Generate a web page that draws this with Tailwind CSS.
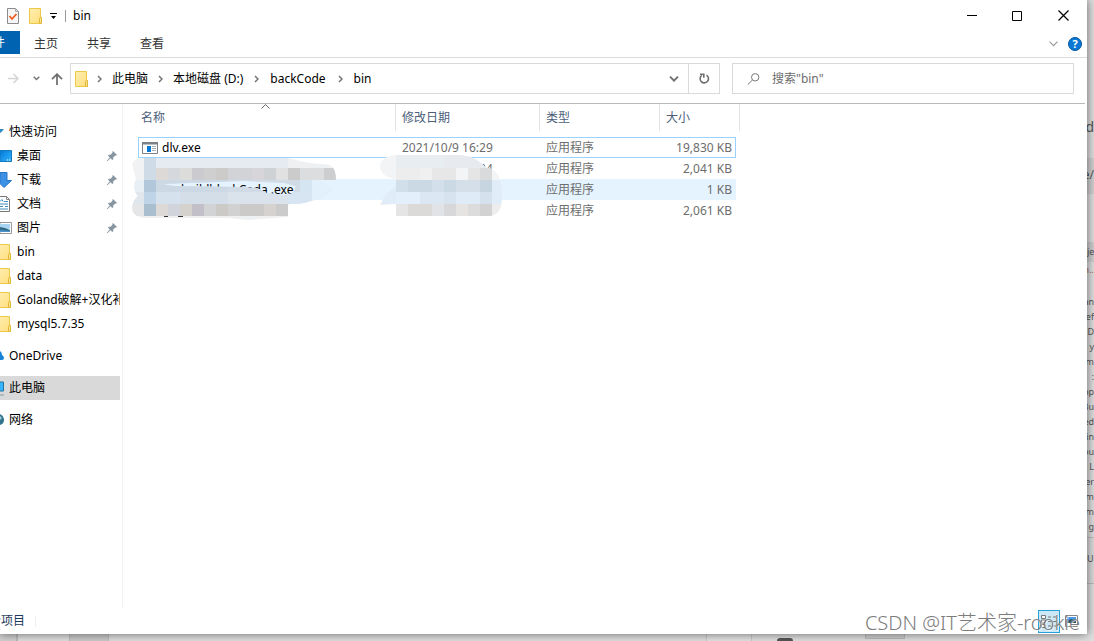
<!DOCTYPE html>
<html lang="zh-CN">
<head>
<meta charset="utf-8">
<title>bin</title>
<script src="https://cdn.jsdelivr.net/npm/@tailwindcss/browser@4"></script>
</head>
<body class="relative grid h-screen grid-cols-[1fr_7px] grid-rows-[1fr_7px] overflow-hidden bg-[#dedede] font-['Noto_Sans','Noto_Sans_CJK_SC',sans-serif] text-xs text-black">

<svg width="0" height="0" class="absolute">
  <defs>
    <linearGradient id="fg" x1="0" y1="0" x2="1" y2="1"><stop offset="0" stop-color="#ffeeb0"/><stop offset="1" stop-color="#ffdf7d"/></linearGradient>
    <linearGradient id="bl" x1="0" y1="0" x2="1" y2="1"><stop offset="0" stop-color="#0078d7"/><stop offset="1" stop-color="#35b5ff"/></linearGradient>
    <symbol id="folder" viewBox="0 0 13 16"><path d="M.5.5h11v9h1v6H.5z" fill="url(#fg)" stroke="#ecc94b"/><path d="M10.500 15V10.500q0-1 1-1h1v6z" fill="#ffe48f" stroke="#deb73b"/></symbol>
    <symbol id="pin" viewBox="0 0 10 10"><path d="M6 0l4 4-1 .7-.8-.2-2 2 .1 1.700-1 .8L3.500 7.200.6 10H0v-.6l2.800-2.900L1 4.700l.8-1 1.700.1 2-2L5.300 1z" fill="#8795a1"/></symbol>
    <symbol id="next" viewBox="0 0 5 8"><path d="M1 1l3 3-3 3" fill="none" stroke="#757575" stroke-width="1.500"/></symbol>
  </defs>
</svg>

<main class="relative z-10 flex min-h-0 min-w-0 flex-col overflow-hidden bg-white shadow-[0_0_9px_rgba(0,0,0,0.55)]">
  <header class="flex h-[31px] shrink-0 items-center">
    <button aria-label="属性" class="ml-[7px]"><svg width="12" height="16" viewBox="0 0 12 16"><path d="M.5.5h8l3 3v12H.5z" fill="#f5f5f5" stroke="#8b8b8b"/><path d="M8.500.5v3h3" fill="none" stroke="#aaa"/><path d="M2.500 8l2.500 3 4.500-5" fill="none" stroke="#f05a1c" stroke-width="1.800"/></svg></button>
    <button aria-label="新建文件夹" class="ml-[10px]"><svg width="13" height="16"><use href="#folder"/></svg></button>
    <button aria-label="自定义快速访问工具栏" class="ml-2"><svg width="7" height="6" viewBox="0 0 7 6"><path d="M0 0h7v1H0zM1 3h5L3.500 6z"/></svg></button>
    <span class="ml-2 h-3 w-px bg-[#9a9a9a]"></span>
    <h1 class="ml-[7px] flex-1">bin</h1>
    <button aria-label="最小化" class="flex h-full w-[45px] items-center justify-center"><svg width="10" height="1"><path d="M0 0h10v1H0z"/></svg></button>
    <button aria-label="最大化" class="flex h-full w-[45px] items-center justify-center"><svg width="10" height="10"><path d="M.5.5h9v9h-9z" fill="none" stroke="#000"/></svg></button>
    <button aria-label="关闭" class="flex h-full w-[48px] items-center justify-center"><svg width="11" height="11"><path d="M.5.5l10 10M10.500.5l-10 10" stroke="#000" stroke-width="1.200"/></svg></button>
  </header>

  <nav aria-label="功能区" class="flex h-[27px] shrink-0 items-start border-b border-[#dadbdc] text-[#333]">
    <button class="flex h-[23px] w-5 justify-end overflow-hidden bg-[#0063b1] pr-[15px] leading-6 whitespace-nowrap text-white">文件</button>
    <button class="ml-[14px] leading-[26px]">主页</button>
    <button class="ml-[29px] leading-[26px]">共享</button>
    <button class="ml-[29px] leading-[26px]">查看</button>
    <span class="flex-1"></span>
    <button aria-label="展开功能区" class="mr-[10px] flex h-[26px] items-center"><svg width="9" height="6" viewBox="0 0 9 6"><path d="M.5.7l4 4 4-4" fill="none" stroke="#999" stroke-width="1.200"/></svg></button>
    <button aria-label="帮助" class="mt-[6px] mr-[5px] h-[14px] w-[14px] rounded-full border border-[#00579d] bg-[#0a78d4] text-[11px] leading-[12px] font-bold text-white">?</button>
  </nav>

  <div class="flex h-[45px] shrink-0 items-center pb-[4px]">
    <button aria-label="前进" class="ml-2"><svg width="11" height="11" viewBox="0 0 11 11"><path d="M0 5.500h10M5.500 1l4.500 4.500L5.500 10" fill="none" stroke="#d4d4d4" stroke-width="1.500"/></svg></button>
    <button aria-label="最近浏览的位置" class="ml-[14px]"><svg width="7" height="5" viewBox="0 0 7 5"><path d="M.7.700l2.800 2.800L6.300.7" fill="none" stroke="#757575" stroke-width="1.500"/></svg></button>
    <button aria-label="上移" class="ml-[11px]"><svg width="12" height="12" viewBox="0 0 12 12"><path d="M6 12V1.500M1 6.200l5-5 5 5" fill="none" stroke="#6c6c6c" stroke-width="1.700"/></svg></button>
    <div class="ml-[7px] flex h-[31px] min-w-0 flex-1 items-center border border-[#d9d9d9] pl-1">
      <svg width="13" height="16" class="shrink-0"><use href="#folder"/></svg>
      <svg width="5" height="8" class="ml-[9px]"><use href="#next"/></svg>
      <a href="#" class="ml-[10px]">此电脑</a>
      <svg width="5" height="8" class="ml-[10px]"><use href="#next"/></svg>
      <a href="#" class="ml-[10px]">本地磁盘 (D:)</a>
      <svg width="5" height="8" class="ml-[11px]"><use href="#next"/></svg>
      <a href="#" class="ml-[11px]">backCode</a>
      <svg width="5" height="8" class="ml-[12px]"><use href="#next"/></svg>
      <a href="#" class="ml-[11px]">bin</a>
      <span class="flex-1"></span>
      <button aria-label="以前的位置" class="mr-[9px]"><svg width="10" height="6" viewBox="0 0 10 6"><path d="M1 .7l4 4 4-4" fill="none" stroke="#707070" stroke-width="1.900"/></svg></button>
      <button aria-label="刷新" class="flex h-full w-[31px] items-center justify-center border-l border-[#d9d9d9]"><svg width="11" height="11" viewBox="0 0 11 11"><path d="M7.500 2.100A4.200 4.200 0 1 1 2.800 2.300M1 1.200h3.800v3.600" fill="none" stroke="#707070" stroke-width="1.600"/></svg></button>
    </div>
    <label class="mr-[13px] ml-3 flex h-[31px] w-[342px] items-center border border-[#d9d9d9] pl-[14px]">
      <svg width="13" height="12" viewBox="0 0 13 12"><circle cx="8.200" cy="4.300" r="3.700" fill="none" stroke="#777"/><path d="M5.500 7L.8 11.500" stroke="#777"/></svg>
      <input aria-label="搜索" placeholder="搜索&quot;bin&quot;" class="ml-3 min-w-0 flex-1 outline-none placeholder:text-[#6d6d6d]">
    </label>
  </div>

  <div class="mr-[2px] h-px shrink-0 bg-[#b9b9b9]"></div>
  <div class="flex min-h-0 flex-1">
    <aside class="w-[123px] shrink-0 overflow-hidden border-r border-[#f3f3f3] pt-4 leading-6 whitespace-nowrap">
      <a href="#" class="flex h-6 items-center"><svg width="4" height="9"><path d="M0 1h4L1.500 4 0 5z" fill="#2d8ac7"/></svg><span class="ml-[5px]">快速访问</span></a>
      <a href="#" class="flex h-6 items-center"><svg width="12" height="12"><path d="M0 .5h11.500v11H0z" fill="url(#bl)" stroke="#1679bd"/><path d="M7 10h1m1 0h1" stroke="#fff"/></svg><span class="ml-[5px] flex-1">桌面</span><svg width="10" height="10" class="mr-[5px]"><use href="#pin"/></svg></a>
      <a href="#" class="flex h-6 items-center"><svg width="12" height="16"><path d="M1 .5h6v8h4.500L4 15.500l-4-4V.5z" fill="#3c91e5" stroke="#2776c8"/></svg><span class="ml-[5px] flex-1">下载</span><svg width="10" height="10" class="mr-[5px]"><use href="#pin"/></svg></a>
      <a href="#" class="flex h-6 items-center"><svg width="12" height="16"><path d="M0 .5h6.500l3 3v12H0" fill="#fff" stroke="#777"/><path d="M6.500.5v3h3" fill="none" stroke="#888"/><path d="M0 5.500l2-2 1 2M4 5.500h4M0 8h8M0 10.500h3m2 0h3M0 13h8" stroke="#3d8dbd" fill="none"/></svg><span class="ml-[5px] flex-1">文档</span><svg width="10" height="10" class="mr-[5px]"><use href="#pin"/></svg></a>
      <a href="#" class="flex h-6 items-center"><svg width="12" height="12"><path d="M0 .5h11.500v11H0z" fill="#fff" stroke="#999"/><path d="M0 2h10v5H0z" fill="#a9d5f5"/><path d="M0 5l5 1 5 2v2H0z" fill="#326b83"/><path d="M0 8l10 1v1H0z" fill="#4b92d0"/></svg><span class="ml-[5px] flex-1">图片</span><svg width="10" height="10" class="mr-[5px]"><use href="#pin"/></svg></a>
      <a href="#" class="flex h-6 items-center"><svg width="11" height="16" viewBox="2 0 11 16"><use href="#folder" width="13" height="16"/></svg><span class="ml-[6px]">bin</span></a>
      <a href="#" class="flex h-6 items-center"><svg width="11" height="16" viewBox="2 0 11 16"><use href="#folder" width="13" height="16"/></svg><span class="ml-[6px]">data</span></a>
      <a href="#" class="mr-[2px] flex h-6 items-center overflow-hidden"><svg width="11" height="16" viewBox="2 0 11 16" class="shrink-0"><use href="#folder" width="13" height="16"/></svg><span class="ml-[6px]">Goland破解+汉化补丁</span></a>
      <a href="#" class="flex h-6 items-center"><svg width="11" height="16" viewBox="2 0 11 16"><use href="#folder" width="13" height="16"/></svg><span class="ml-[6px]">mysql5.7.35</span></a>
      <a href="#" class="mt-2 flex h-6 items-center"><svg width="4" height="10"><path d="M0 0q2 1 2 4 2 1 2 3t-2 2H0z" fill="#1683d8"/></svg><span class="ml-[5px]">OneDrive</span></a>
      <a href="#" class="mt-2 mr-[2px] flex h-6 items-center bg-[#d9d9d9]"><svg width="4" height="15"><path d="M0 1h3.500v9H0" fill="#35b5ff" stroke="#25749f"/><path d="M0 14h4" stroke="#8499a8"/></svg><span class="ml-[5px]">此电脑</span></a>
      <a href="#" class="mt-2 flex h-6 items-center"><svg width="4" height="13"><path d="M0 0q4 2 4 6t-4 5z" fill="#32748e"/><path d="M0 2l2 2-2 2" fill="#9bcbd9"/></svg><span class="ml-[5px]">网络</span></a>
    </aside>

    <section class="relative min-w-0 flex-1 pl-[15px]">
      <table class="w-[598px] table-fixed border-separate border-spacing-0 text-[#6d6d6d]">
        <colgroup><col class="w-[258px]"><col class="w-[144px]"><col class="w-[120px]"><col class="w-[76px]"></colgroup>
        <thead class="text-left text-[#4c607a]">
          <tr class="h-[33px] align-top leading-[27px]">
            <th class="relative p-0 font-normal"><div class="h-[27px] border-r border-[#e5e5e5] pl-[3px]">名称</div><svg width="9" height="5" class="absolute top-0 left-[123px]"><path d="M.5 4.500l4-4 4 4" fill="none" stroke="#666"/></svg></th>
            <th class="p-0 font-normal"><div class="h-[27px] border-r border-[#e5e5e5] pl-[6px]">修改日期</div></th>
            <th class="p-0 font-normal"><div class="h-[27px] border-r border-[#e5e5e5] pl-[6px]">类型</div></th>
            <th class="p-0 font-normal"><div class="-mr-1 h-[27px] border-r border-[#e5e5e5] pl-[6px]">大小</div></th>
          </tr>
        </thead>
        <tbody class="leading-[19px] whitespace-nowrap">
          <tr class="h-[21px] outline-1 -outline-offset-1 outline-[#99d1ff]">
            <td class="p-0 pl-1 text-black"><div class="flex items-center gap-1"><svg width="16" height="12"><path d="M.5.5h15v11H.5z" fill="#fff" stroke="#7b8186"/><path d="M0 0h16v2.500H0z" fill="#7b8186"/><path d="M5 4h4v6H5z" fill="#0078d7"/><path d="M10 4.500h4m-4 2h4m-4 2h4" stroke="#a2b0ba"/></svg>dlv.exe</div></td>
            <td class="p-0 pl-[6px]">2021/10/9 16:29</td><td class="p-0 pl-[6px]">应用程序</td><td class="p-0 pr-1 text-right">19,830 KB</td>
          </tr>
          <tr class="h-[21px]">
            <td class="p-0"></td>
            <td class="p-0 pl-[6px]">2021/10/9 16:24</td><td class="p-0 pl-[6px]">应用程序</td><td class="p-0 pr-1 text-right">2,041 KB</td>
          </tr>
          <tr class="h-[21px] bg-[#e5f3ff]">
            <td class="p-0 pl-[43px] text-black">buildblackCoda .exe</td>
            <td class="p-0"></td><td class="p-0 pl-[6px]">应用程序</td><td class="p-0 pr-1 text-right">1 KB</td>
          </tr>
          <tr class="h-[21px]">
            <td class="p-0"></td>
            <td class="p-0"></td><td class="p-0 pl-[6px]">应用程序</td><td class="p-0 pr-1 text-right">2,061 KB</td>
          </tr>
        </tbody>
      </table>

      <!-- pixelated smears over the private file names and dates; units are pixels from the section's corner -->
      <svg class="pointer-events-none absolute top-0 left-0" width="400" height="125" viewBox="123 104 400 125">
        <defs>
          <clipPath id="c1"><path clip-rule="evenodd" d="M132 164q2-6 12-6H288l20 5 22 2q6 3 6 15H318l14 10-10 8-18 5-16 2v12l-40 3-20-2H144q-12-2-12-10 1-8 6-12-6-7-2-17zM162 184l12 2 65 1 18 1 10 5 18 2 8-2 3-7-12-3-40-2z"/></clipPath>
          <clipPath id="c2"><path d="M380 165q2-9 16-10h65q16 2 24 12 8 1 13 8 6 12 3 32-4 9-12 9H396v-12l-16 1 5-10 11-10V179q-16-2-16-14z"/></clipPath>
        </defs>
        <g clip-path="url(#c1)">
          <path d="M130 155h210v25H130z" fill="#f1f2f3"/><path d="M130 180h210v24H130z" fill="#d7e4f0"/><path d="M130 204h160v16H130z" fill="#eff0f1"/>
          <path d="M144 158h144v10H144z" fill="#e5ebf0"/><path d="M288 158h40v10h-40z" fill="#eef0f2"/>
          <path d="M156 168h12v12h-12z" fill="#ddd9d6"/><path d="M168 168h12v12h-12z" fill="#d5d8dd"/><path d="M180 168h12v12h-12z" fill="#dcdcda"/><path d="M192 168h12v12h-12z" fill="#cbcbcf"/><path d="M204 168h12v12h-12z" fill="#d0cfcf"/><path d="M216 168h12v12h-12z" fill="#cdcbc9"/><path d="M228 168h24v12h-24z" fill="#d1d3d6"/><path d="M252 168h12v12h-12z" fill="#d7d5da"/><path d="M264 168h12v12h-12z" fill="#cfd2d4"/><path d="M276 168h12v12h-12z" fill="#e1e1e1"/><path d="M288 168h12v12h-12z" fill="#cbcbcb"/><path d="M300 168h24v12h-24z" fill="#dcdddf"/><path d="M324 168h12v12h-12z" fill="#cdced0"/>
          <path d="M156 180h72v12h-72z" fill="#ccd9e4"/><path d="M228 180h72v12h-72z" fill="#d0dbe5"/><path d="M300 180h12v12h-12z" fill="#d6e5f2"/><path d="M312 180h24v24h-24z" fill="#e2f0fc"/>
          <path d="M156 192h24v12h-24z" fill="#d5e1ed"/><path d="M180 192h48v12h-48z" fill="#d3dee9"/><path d="M228 192h60v12h-60z" fill="#dae3ec"/><path d="M288 192h24v12h-24z" fill="#d7e5f2"/>
          <path d="M156 204h12v12h-12z" fill="#ddd9d6"/><path d="M168 204h12v12h-12z" fill="#d1d4da"/><path d="M180 204h12v12h-12z" fill="#d5d2ce"/><path d="M192 204h12v12h-12z" fill="#c3bfc9"/><path d="M204 204h12v12h-12z" fill="#d2d3d5"/><path d="M216 204h12v12h-12z" fill="#cbcac7"/><path d="M228 204h12v12h-12z" fill="#d1d1d1"/><path d="M240 204h24v12h-24z" fill="#cccac8"/><path d="M264 204h12v12h-12z" fill="#d6d2cf"/><path d="M276 204h12v12h-12z" fill="#cbcbcc"/>
          <path d="M144 158h12v22h-12z" fill="#cfdce7"/><path d="M144 180h12v12h-12z" fill="#b2c7d9"/><path d="M144 192h12v12h-12z" fill="#bfd4e6"/><path d="M144 204h12v12h-12z" fill="#a9bfd0"/>
          <path d="M132 180h12v12h-12z" fill="#e8eff5"/><path d="M132 192h12v12h-12z" fill="#dfe7ed"/><path d="M132 204h12v12h-12z" fill="#e5e6e7"/>
        </g>
        <path d="M164 216.500h4m10 0h5" stroke="#333"/>
        <g clip-path="url(#c2)">
          <path d="M378 154h130v26H378z" fill="#f2f4f6"/><path d="M378 180h130v24H378z" fill="#e0edf8"/><path d="M378 204h130v14H378z" fill="#ededee"/>
          <path d="M396 155h48v13h-48z" fill="#e8edf1"/><path d="M444 155h48v13h-48z" fill="#e7eaee"/>
          <path d="M396 168h24v12h-24z" fill="#ededee"/><path d="M420 168h12v12h-12z" fill="#f0f0f1"/><path d="M432 168h24v12h-24z" fill="#e8e7e7"/><path d="M468 168h12v12h-12z" fill="#e5e5e5"/><path d="M480 168h12v12h-12z" fill="#d9dadb"/>
          <path d="M396 180h12v12h-12z" fill="#d1dfeb"/><path d="M408 180h24v12h-24z" fill="#cbd9e4"/><path d="M432 180h12v12h-12z" fill="#d3dfea"/><path d="M444 180h12v12h-12z" fill="#cbd9e4"/><path d="M456 180h24v12h-24z" fill="#d4dfe9"/><path d="M480 180h12v12h-12z" fill="#c7d5e1"/>
          <path d="M396 192h24v12h-24z" fill="#e3f0fc"/><path d="M420 192h24v12h-24z" fill="#dbe8f4"/><path d="M444 192h12v12h-12z" fill="#d7e4f0"/><path d="M456 192h24v12h-24z" fill="#dfebf6"/><path d="M480 192h12v12h-12z" fill="#d5e2ed"/>
          <path d="M396 204h12v12h-12z" fill="#e5e5e6"/><path d="M408 204h24v12h-24z" fill="#dbdad9"/><path d="M432 204h12v12h-12z" fill="#e1e3e6"/><path d="M444 204h12v12h-12z" fill="#d8d8da"/><path d="M456 204h12v12h-12z" fill="#e6e4e3"/><path d="M468 204h12v12h-12z" fill="#dcdcdc"/><path d="M480 204h12v12h-12z" fill="#d2d2d3"/>
        </g>
      </svg>
    </section>
  </div>

  <footer class="flex h-[26px] shrink-0 items-center text-[#1e395b]">
    <span class="flex w-[25px] justify-end overflow-hidden whitespace-nowrap">4 个项目</span>
    <span class="ml-[10px] h-[11px] w-px bg-[#eee]"></span>
    <span class="flex-1"></span>
    <button aria-label="详细信息" class="flex h-[23px] w-[22px] items-center justify-center border border-[#26a0da] bg-[#cce8f6]"><svg width="16" height="13"><path d="M.5.5h4v3h-4zM.5 5h4v3h-4zM.5 9.500h4v3h-4z" fill="#fff" stroke="#777"/><path d="M7 2h3m2 0h3M7 6.500h3m2 0h3M7 11h3m2 0h3" stroke="#777"/></svg></button>
    <button aria-label="大图标" class="mr-[9px] ml-[5px]"><svg width="13" height="12"><path d="M.5.5h12v11H.5z" fill="#fff" stroke="#888"/><path d="M2 2h9v4H2z" fill="#4b9bea"/><path d="M2 6l4-2 5 2v2H2z" fill="#285465"/></svg></button>
  </footer>
</main>

<!-- sliver of the window behind, right side -->
<div class="relative overflow-hidden bg-[#dcdcdc] text-[9px] text-[#555]">
  <div class="absolute top-[158px] h-9 w-full bg-[#cecece]"></div>
  <div class="absolute top-[242px] h-5 w-full bg-[#ccc]"></div>
  <div class="absolute top-[537px] h-[47px] w-full border-y border-[#bbb] bg-[#d8d8d8]"></div>
  <span class="absolute top-[117px] right-0 text-sm">d</span>
  <span class="absolute top-[167px] right-0 text-xs">e/</span>
  <span class="absolute top-[246px] left-0">ject</span>
  <span class="absolute top-[264px] right-0 text-[#a65]">n..</span>
  <div class="absolute top-[294px] right-0 text-right leading-[15px]">an<br>ef<br>D<br>y<br>om<br>:<br>pp<br>Bu<br>ed<br>in<br>ou<br>L<br>er<br>m<br>m<br>g</div>
  <span class="absolute top-[553px] left-0">U</span>
</div>

<!-- sliver of the window behind, bottom side -->
<div class="col-span-2 flex bg-[#dedede]">
  <span class="w-4 bg-[#d0d0d0]"></span><span class="w-[2px] bg-[#bbb]"></span><span class="w-[51px]"></span>
  <span class="w-10 border-x border-[#bbb] bg-[#cacaca]"></span><span class="w-[597px]"></span><span class="w-px bg-[#c8c8c8]"></span><span class="w-11 bg-[#e2e2e2]"></span><span class="w-px bg-[#c8c8c8]"></span>
  <span class="ml-[25px] w-4 self-end rounded-t-sm bg-[#555] pt-[3px]"></span><span class="ml-[72px] h-[5px] w-10 border border-t-0 border-[#bbb] bg-[#cfcfcf]"></span>
</div>

<p class="absolute right-[14px] bottom-1 z-20 text-[20px] leading-[28px] font-light whitespace-nowrap text-[#7c7c7c] [text-shadow:1px_1px_0_#ffffffb0]">CSDN @IT艺术家-rookie</p>
</body>
</html>
